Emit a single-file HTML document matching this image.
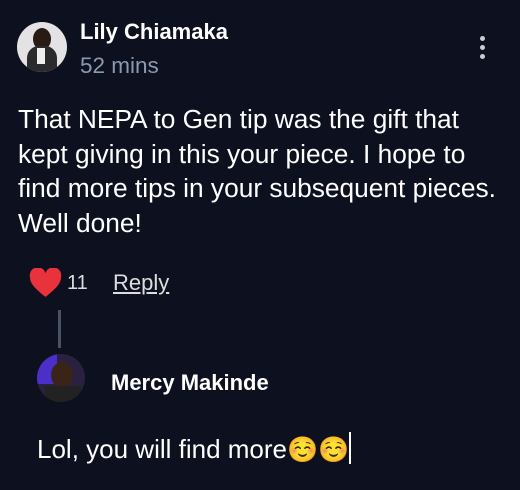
<html><head><style>
body{margin:0;width:520px;height:490px;background:#0d111f;font-family:"Liberation Sans",sans-serif;color:#fff;position:relative;overflow:hidden}
.a{position:absolute}
</style></head><body>
<div class="a" style="left:17px;top:22px;width:50px;height:50px;border-radius:50%;background:#e4e2e4;overflow:hidden">
<div class="a" style="left:16px;top:6px;width:18px;height:22px;border-radius:50%;background:#2a1a14"></div>
<div class="a" style="left:10px;top:24px;width:30px;height:30px;border-radius:40% 40% 0 0;background:#2b2b2e"></div>
<div class="a" style="left:20px;top:26px;width:8px;height:16px;background:#eee"></div>
</div>
<div class="a" style="left:80px;top:19px;font-size:22px;font-weight:bold">Lily Chiamaka</div>
<div class="a" style="left:80px;top:53px;font-size:22.5px;color:#8d99ae">52 mins</div>
<div class="a" style="left:480px;top:36px;width:5px;height:5px;border-radius:50%;background:#ccc;box-shadow:0 9px 0 #ccc,0 18px 0 #ccc"></div>
<div class="a" style="left:18px;top:102px;font-size:26.3px;line-height:34.5px;white-space:nowrap">That NEPA to Gen tip was the gift that<br>kept giving in this your piece. I hope to<br>find more tips in your subsequent pieces.<br>Well done!</div>
<svg class="a" style="left:29px;top:268px" width="33" height="30" viewBox="0 0 32 29"><path d="M16 28C6 20 1 15 1 9A7.5 7.5 0 0 1 16 5A7.5 7.5 0 0 1 31 9C31 15 26 20 16 28Z" fill="#e8323c"/></svg>
<div class="a" style="left:67px;top:272px;font-size:20px;color:#ddd">11</div>
<div class="a" style="left:113px;top:270px;font-size:22px;color:#ddd;text-decoration:underline">Reply</div>
<div class="a" style="left:58px;top:310px;width:3px;height:38px;background:#4a5266"></div>
<div class="a" style="left:37px;top:354px;width:48px;height:48px;border-radius:50%;background:#2a2140;overflow:hidden">
<div class="a" style="left:0;top:0;width:20px;height:30px;background:#4a2fc8"></div>
<div class="a" style="left:14px;top:8px;width:22px;height:26px;border-radius:50%;background:#3a2418"></div>
<div class="a" style="left:8px;top:32px;width:36px;height:20px;background:#222"></div>
</div>
<div class="a" style="left:111px;top:370px;font-size:22px;font-weight:bold">Mercy Makinde</div>
<div class="a" style="left:37px;top:432px;font-size:26px;white-space:nowrap">Lol, you will find more<span style="font-size:25px">☺️☺️</span><span style="display:inline-block;width:2px;height:32px;background:#fff;vertical-align:-6px"></span></div>
</body></html>
